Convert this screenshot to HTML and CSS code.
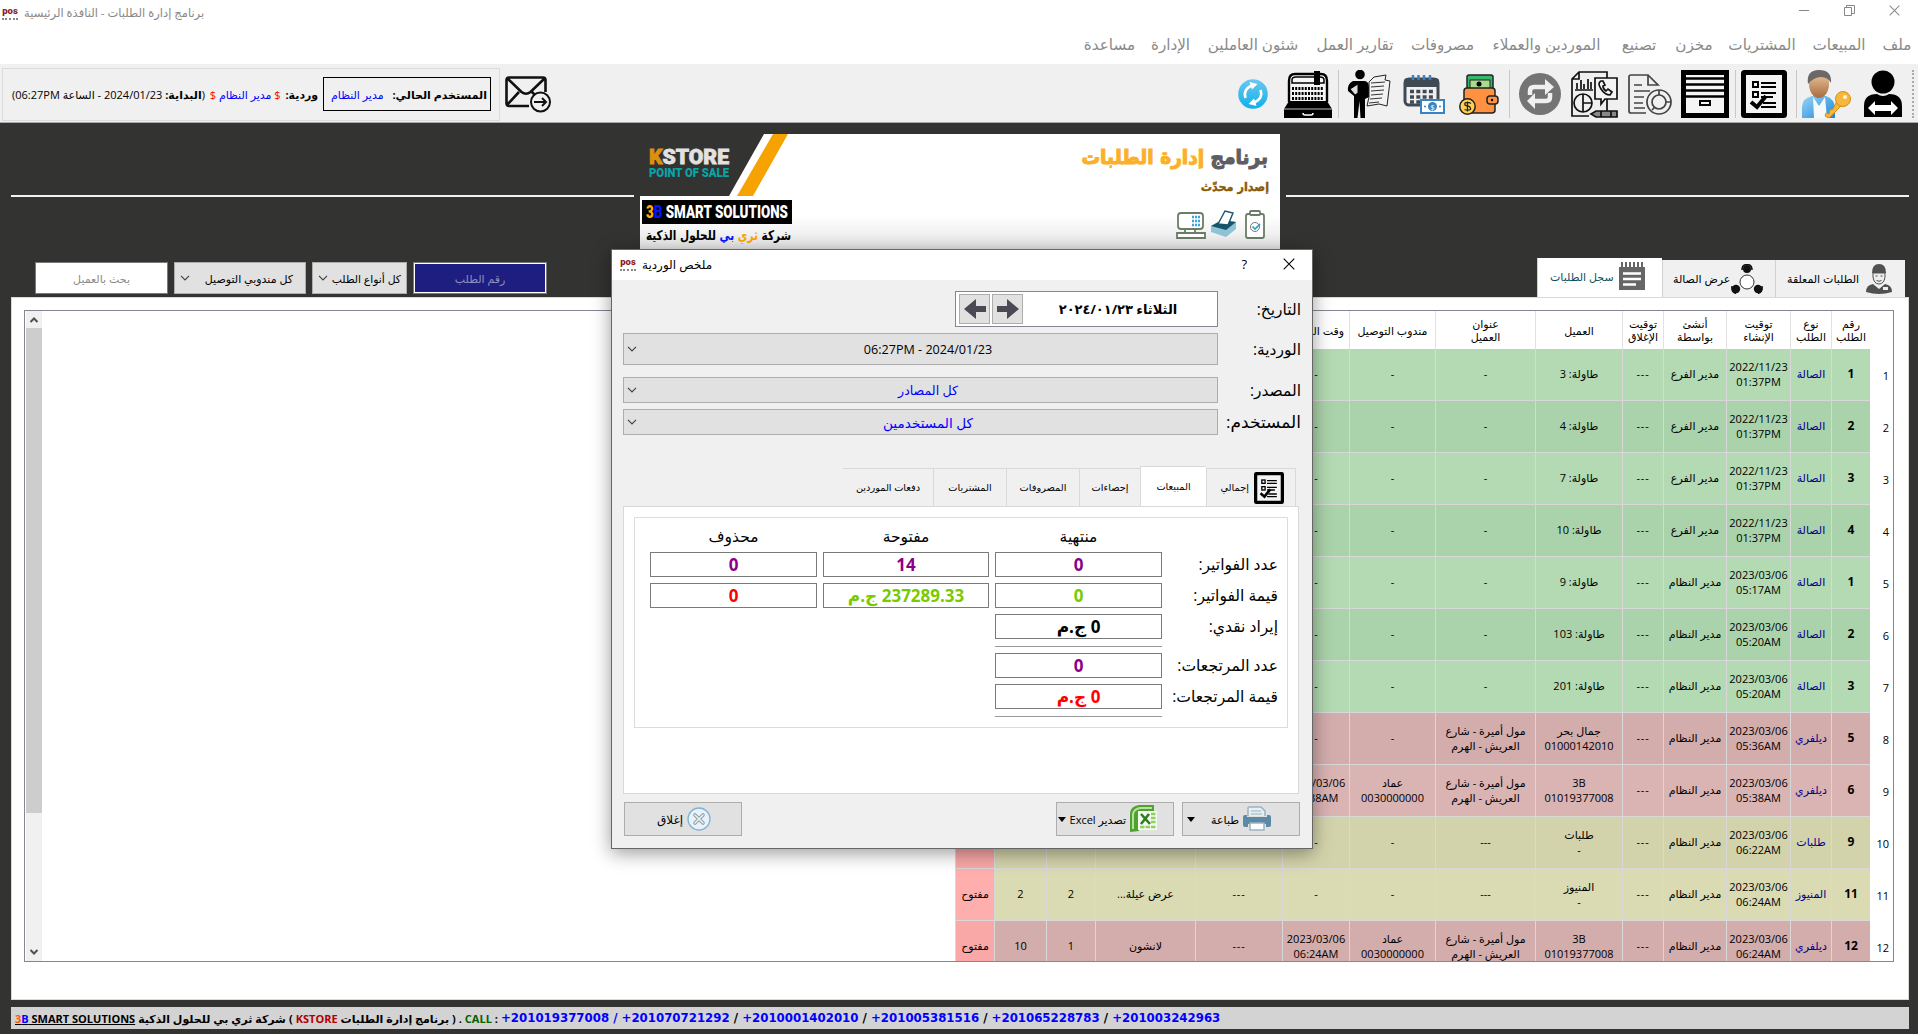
FILE: index.html
```
<!DOCTYPE html>
<html lang="ar" dir="rtl">
<head>
<meta charset="utf-8">
<title>برنامج إدارة الطلبات - النافذة الرئيسية</title>
<link rel="stylesheet" href="styles.css">
</head>
<body>
<svg width="0" height="0" class="defs">
  <symbol id="checklist" viewBox="0 0 46 48" preserveAspectRatio="none"><rect x="2.5" y="2.5" width="41" height="43" rx="1" fill="#f4f4f4" stroke="#000" stroke-width="5"/><g fill="none" stroke="#000" stroke-width="2"><rect x="12" y="12" width="5" height="5"/><rect x="12" y="22" width="5" height="5"/><path d="M20 13h15M20 17h15M20 23h15M20 27h12M22 33h13M20 37h15"/></g><path d="M10 32l6 5 9-11" fill="none" stroke="#000" stroke-width="4"/></symbol>
  <symbol id="down" viewBox="0 0 10 6"><path d="M1 .8l4 4 4-4" fill="none" stroke="#444" stroke-width="1.2"/></symbol>
  <symbol id="close" viewBox="0 0 12 12"><path d="M.7.7l10.6 10.6M11.3.7L.7 11.3" fill="none" stroke="currentColor" stroke-width="1.1"/></symbol>
</svg>

<header class="titlebar">
  <div class="win-controls">
    <svg width="11" height="11"><path d="M0 5.5h10" stroke="#888"/></svg>
    <svg width="11" height="11"><path d="M.5 2.5h7v8h-7zM2.500 2.500v-2h8v8h-2.500" fill="none" stroke="#888"/></svg>
    <svg width="11" height="11" class="gray"><use href="#close"/></svg>
  </div>
  <div class="win-title gray"><span class="logo">pos</span><span>برنامج إدارة الطلبات - النافذة الرئيسية</span></div>
</header>

<nav class="menu">
  <span>ملف</span><span>المبيعات</span><span>المشتريات</span><span>مخزن</span><span>تصنيع</span><span>الموردين والعملاء</span><span>مصروفات</span><span>تقارير العمل</span><span>شئون العاملين</span><span>الإدارة</span><span>مساعدة</span>
</nav>

<div class="toolbar">
  <div class="tools">
    <i class="grip"></i>
    <svg width="40" height="48" viewBox="0 0 40 48"><circle cx="20" cy="12" r="11.500"/><path d="M1 47V36Q1 24 14 24q6 4 12 0 13 0 13 12v11z"/><path d="M5 38l7-7v4h16v-4l7 7-7 7v-4H12v4z" fill="#fff"/></svg>
    <svg width="50" height="48" viewBox="0 0 50 48"><defs><linearGradient id="shirt" x2="1" y2="1"><stop stop-color="#9bd4f7"/><stop offset="1" stop-color="#1689d8"/></linearGradient><linearGradient id="face" x2="0" y2="1"><stop stop-color="#f3cfa8"/><stop offset="1" stop-color="#a76b3e"/></linearGradient></defs><path d="M0 48V36q1-8 10-10h14q9 3 9 13v9z" fill="url(#shirt)"/><path d="M11 27l6 9 6-9 2 21H12z" fill="#f5f9fc"/><ellipse cx="17" cy="14" rx="10" ry="14" fill="url(#face)"/><path d="M6 14Q4 0 17 0t12 13q-3-6-10-6T6 14z" fill="#6b6866"/><g fill="#f6b73c" stroke="#d98d15"><path d="M35 31l5 4-13 13-4-2 1-3 3 1 1-4 3-1z"/><circle cx="41" cy="29" r="7.500"/></g><circle cx="43" cy="27" r="2" fill="#fff4d0"/></svg>
    <i class="sep"></i>
    <svg width="46" height="48"><use href="#checklist"/></svg>
    <i class="sep"></i>
    <svg width="48" height="48" viewBox="0 0 48 48"><rect x="2.500" y="2.500" width="43" height="43" fill="#f5f5f5" stroke="#000" stroke-width="5"/><path d="M4 8.500h40M4 14.500h40M4 20.500h40M4 26.500h40" stroke="#000" stroke-width="2.600"/><rect x="19" y="31" width="10" height="4" fill="none" stroke="#000" stroke-width="2"/></svg>
    <svg width="44" height="42" viewBox="0 0 44 42" fill="none" stroke="#444" stroke-width="1.700"><path d="M18 40H3q-2 0-2-2V4q0-2 2-2h17l10 10H20V2M6 12h8M6 18h16M6 24h10M6 30h9M6 35h11"/><circle cx="31" cy="29" r="12"/><circle cx="31" cy="29" r="7"/><path d="M31 17v5M43 29h-5M24 37l3-3"/></svg>
    <svg width="47" height="47" viewBox="0 0 47 47" fill="none" stroke="#111" stroke-width="1.700"><path d="M18 45H1V8l7-7h28v6M8 1v7H1M36 26v14M4 19h18M6 18V12M10 18v-9M13 18v-5M17 18V8M20 18v-7"/><path d="M24 7h22v21H34l-4 5v-5h-6z" fill="#f4f4f4"/><path d="M30 10q-4 2 0 8t9 6l2-3-4-3-2 2q-3-2-3-5l2-1-2-4z"/><circle cx="12" cy="32" r="9"/><path d="M12 23v18M12 32h9"/><path d="M20 43l5-3h21v6H25zM30 40v6M40 40v6" fill="#888"/></svg>
    <svg width="42" height="42" viewBox="0 0 42 42"><circle cx="21" cy="21" r="21" fill="#747474"/><g fill="none" stroke="#f0f0f0" stroke-width="4.500"><path d="M11 22v-4q0-4 4-4h14"/><path d="M31 20v4q0 4-4 4H15"/></g><path d="M26 6l9 8-9 8zM16 20l-8 8 8 8z" fill="#f0f0f0"/></svg>
    <i class="sep"></i>
    <svg width="40" height="41" viewBox="0 0 40 41"><rect x="8" y="1" width="26" height="18" rx="2" fill="#35b86b" stroke="#222" stroke-width="1.500"/><rect x="11" y="6" width="20" height="12" fill="#a7dd8d" stroke="#222"/><circle cx="20" cy="10" r="2.500"/><rect x="5" y="14" width="31" height="25" rx="3" fill="#ff9140" stroke="#222" stroke-width="1.500"/><rect x="28" y="22" width="11" height="8" rx="3" fill="#ff9140" stroke="#222" stroke-width="1.500"/><circle cx="33" cy="26" r="1.200"/><circle cx="8.500" cy="32.500" r="7.700" fill="#ffd052" stroke="#222" stroke-width="1.500"/><path d="M12 29.500q-3-2-6-.5-1 2.500 2.500 3t3 3.500q-3 1.500-6 0M8.500 27.500v10" fill="none" stroke="#222" stroke-width="1.300"/></svg>
    <svg width="42" height="39" viewBox="0 0 42 39"><rect x="2" y="4" width="33" height="26" rx="4" fill="none" stroke="#404a54" stroke-width="3"/><path d="M1 12V6q0-3 4-3h27q4 0 4 3v6z" fill="#404a54"/><path d="M10 0v5M15.500 0v5M21 0v5M27 0v5" stroke="#3b82c4" stroke-width="2.500"/><path d="M7 16.500h23M7 22h23M7 27h12" stroke="#404a54" stroke-width="3.500" stroke-dasharray="4 2.300"/><rect x="18" y="25" width="23" height="13" fill="#fff" stroke="#3b82c4" stroke-width="2"/><circle cx="29.500" cy="31.500" r="4.500" fill="#3b82c4"/><text x="29.500" y="34.500" font-size="8" text-anchor="middle" fill="#fff">$</text><circle cx="22" cy="31.500" r="1" fill="#3b82c4"/><circle cx="37" cy="31.500" r="1" fill="#3b82c4"/></svg>
    <svg width="44" height="48" viewBox="0 0 44 48"><circle cx="13" cy="4.500" r="4.800"/><path d="M6 11h12q4 1 4 6v10l-4 2v19h-4.500l-1-17-2 17H7V26l-6-5q-1-7 5-10z"/><path d="M3 19l8-5v9l-3 2z" fill="#ddd" stroke="#000"/><path d="M27 7l12-2-1 5 5 1-3 25-8-2-12 2 2-9V12z" fill="#f2f2f2" stroke="#222"/><path d="M24 13l14-1M24 17l13-1M24 21l13-1M24 25l12-1M23 29l12-1M22 33l10-1" stroke="#333"/></svg>
    <i class="sep"></i>
    <svg width="48" height="47" viewBox="0 0 48 47"><path d="M5 31V10q0-7 6-7h26q6 0 6 7v21" fill="#f5f5f5" stroke="#000" stroke-width="2.400"/><path d="M8 12V9q0-3 4-3h24q4 0 4 3v3z" fill="none" stroke="#000" stroke-width="1.500"/><path d="M30 0h6v14h-6z"/><path d="M8 17.500h32M8 22.500h32M8 27.500h32" stroke="#000" stroke-width="3" stroke-dasharray="2 1.200"/><path d="M5 30h38l5 8v9H0v-9z"/><path d="M0 38h48" stroke="#bbb"/><path d="M19 42q0 2 2 2h6q2 0 2-2" fill="none" stroke="#fff" stroke-width="1.500"/></svg>
    <svg width="30" height="30" viewBox="0 0 30 30"><defs><linearGradient id="sky" x2="0" y2="1"><stop stop-color="#6cc8f2"/><stop offset="1" stop-color="#0fb0ea"/></linearGradient></defs><circle cx="15" cy="15" r="14.800" fill="url(#sky)"/><g fill="none" stroke="#fff" stroke-width="2.600"><path d="M7.500 19q-3-8 6-12.500"/><path d="M22.500 11q3 8-6 12.500"/></g><path d="M11.500 3l8 2-5.500 5.500zM18.500 27l-8-2 5.500-5.500z" fill="#fff"/></svg>
  </div>
  <div class="status-side">
    <svg width="47" height="37" viewBox="0 0 47 37" fill="none" stroke="#111" stroke-width="2.600"><path d="M24 30H4q-2.500 0-2.500-2.500V4q0-2.500 2.500-2.500h34Q40.500 1.500 40.500 4v12M3 3l13.500 13q4.500 3.500 9 0L39 3M2 29l12-13M27 16l3 3"/><circle cx="35.500" cy="26" r="9.500" stroke-width="2"/><path d="M29 26h12M37 22l4 4-4 4" stroke-width="2"/></svg>
    <div class="status">
      <div class="user-box"><b>المستخدم الحالي:</b><span class="blue">مدير النظام</span></div>
      <b>وردية:</b>
      <span class="blue"><em>$</em> مدير النظام <em>$</em></span>
      <span>(<b>البداية:</b> 2024/01/23 - الساعة <bdi>06:27PM</bdi>)</span>
    </div>
  </div>
</div>

<main>
  <div class="hero">
    <i class="rule"></i>
    <svg class="banner" width="640" height="116" viewBox="0 0 640 116" direction="ltr">
      <defs><linearGradient id="fade" x2="0" y2="1"><stop offset=".7" stop-color="#fff"/><stop offset="1" stop-color="#e6e6e6"/></linearGradient></defs>
      <rect width="640" height="116" fill="url(#fade)"/>
      <path d="M0 0h124L89 62H0z" fill="#333331"/><path d="M133 0h15l-35 62H97z" fill="#f6a200"/>
      <g font-family="Roboto, sans-serif" font-weight="900">
        <text x="9" y="30" font-size="20" textLength="80" lengthAdjust="spacingAndGlyphs" fill="#e2e2e2" stroke="#e2e2e2" stroke-width=".8"><tspan fill="#d9920f" stroke="#d9920f">K</tspan>STORE</text>
        <text x="9" y="43" font-size="12.500" textLength="80" lengthAdjust="spacingAndGlyphs" fill="#0aa3a8">POINT OF SALE</text>
      </g>
      <rect x="2" y="66" width="150" height="24" fill="#000"/>
      <text x="6" y="84" font-family="Roboto, sans-serif" font-weight="900" font-size="18" textLength="142" lengthAdjust="spacingAndGlyphs" fill="#fff"><tspan fill="#ffb000">3</tspan><tspan fill="#0018ff">B</tspan> SMART SOLUTIONS</text>
      <g direction="rtl" font-family="DejaVu Sans, sans-serif" font-weight="700">
        <text transform="translate(151 106) scale(.78 1)" font-size="13.500" fill="#000">شركة <tspan fill="#ffa500">ثري</tspan> <tspan fill="#0018ff">بي</tspan> للحلول الذكية</text>
        <text transform="translate(628 30) scale(.93 1)" font-size="20" fill="#5e5e62" stroke="#5e5e62" stroke-width="1.100">برنامج <tspan fill="#fbb02a" stroke="#fbb02a">إدارة الطلبات</tspan></text>
        <text transform="translate(629 57) scale(.9 1)" font-size="12.500" fill="#8a5a08" stroke="#8a5a08" stroke-width=".4">إصدار محدّث</text>
      </g>
      <g fill="#fff" stroke="#6b7d66" stroke-width="1.800"><rect x="538" y="79" width="25" height="16" rx="3"/><path d="M545 95h10v4h-10zM537 99h28v5h-28z"/><rect x="606" y="80" width="18" height="24" rx="2"/><rect x="610" y="77" width="10" height="4" rx="1"/></g>
      <path d="M552 83h8M552 87h8M552 91h8" stroke="#3aa5d8" stroke-width="2.500" stroke-dasharray="2 1"/>
      <path d="M571 92l11-6 14 2v7l-10 8-15-5z" fill="#8fc3d6"/><path d="M571 92l11-6 14 2-10 8z" fill="#17536b"/><path d="M578 90l7-13 8 2-5 12z" fill="#fff" stroke="#17536b" stroke-width="1.400"/>
      <circle cx="615" cy="93" r="4.500" fill="none" stroke="#777"/><path d="M612.500 92.500l2.500 2.500 5-5" fill="none" stroke="#2a9fc9" stroke-width="1.600"/>
    </svg>
    <i class="rule"></i>
  </div>

  <div class="top-row">
    <div class="tabs">
      <div class="tab t1"><svg width="26" height="30" viewBox="0 0 26 30" fill="#505050"><path d="M6 9q0-9 7-9t7 9z"/><path d="M7 9h12v4q-1 7-6 7t-6-7z" fill="#eee" stroke="#505050"/><path d="M0 28q0-7 7-8l6 5 6-5q7 1 7 8-13 4-26 0z"/><path d="M9.500 12h2M14.500 12h2M10.500 16.500q2.500 1.500 5 0" fill="none" stroke="#505050"/><rect x="17" y="23" width="5" height="3" fill="#eee"/></svg><span>الطلبات المعلقة</span></div>
      <div class="tab t2"><svg width="32" height="30" viewBox="0 0 32 30"><circle cx="16" cy="18" r="7" fill="#fff" stroke="#333"/><g fill="#111"><circle cx="16" cy="5" r="4"/><circle cx="5" cy="25" r="4.200"/><circle cx="27" cy="25" r="4.200"/></g><path d="M11 6q0-5.500 5-5.500T21 6M1 22q-1 6 4 7.500M31 22q1 6-4 7.500" fill="none" stroke="#111" stroke-width="1.500"/></svg><span>عرض الصالة</span></div>
      <div class="tab t3 active"><svg width="28" height="29" viewBox="0 0 28 29"><path d="M1 5h26v23H1z" fill="#666"/><path d="M4 0v6M8 0v6M12 0v6M16 0v6M20 0v6M24 0v6" stroke="#666" stroke-width="2"/><path d="M5 11.500h18M5 17h18M5 22.500h13" stroke="#fff" stroke-width="2.500"/></svg><span>سجل الطلبات</span></div>
    </div>
    <div class="filters">
      <div class="field number">رقم الطلب</div>
      <div class="select kinds"><span>كل أنواع الطلب</span><svg width="10" height="6"><use href="#down"/></svg></div>
      <div class="select couriers"><span>كل مندوبي التوصيل</span><svg width="10" height="6"><use href="#down"/></svg></div>
      <div class="field client">بحث بالعميل</div>
    </div>
  </div>

  <section class="panel">
    <div class="grid-frame">
      <table class="orders">
        <colgroup><col class="w21"><col class="w39"><col class="w41"><col class="w64"><col class="w63"><col class="w41"><col class="w87"><col class="w100"><col class="w86"><col class="w67"><col class="w87"><col class="w100"><col class="w49"><col class="w52"><col class="w39"></colgroup>
        <thead><tr><th></th><th>رقم<br>الطلب</th><th>نوع<br>الطلب</th><th>توقيت<br>الإنشاء</th><th>أنشئ<br>بواسطة</th><th>توقيت<br>الإغلاق</th><th>العميل</th><th>عنوان<br>العميل</th><th>مندوب التوصيل</th><th>وقت الخروج</th><th></th><th></th><th></th><th></th><th></th></tr></thead>
        <tbody>
          <tr class="g1"><th>1</th><td>1</td><td>الصالة</td><td>2022/11/23<br>01:37PM</td><td>مدير الفرع</td><td>---</td><td>طاولة: 3</td><td>-</td><td>-</td><td>-</td><td></td><td></td><td></td><td></td><td></td></tr>
          <tr class="g2"><th>2</th><td>2</td><td>الصالة</td><td>2022/11/23<br>01:37PM</td><td>مدير الفرع</td><td>---</td><td>طاولة: 4</td><td>-</td><td>-</td><td>-</td><td></td><td></td><td></td><td></td><td></td></tr>
          <tr class="g1"><th>3</th><td>3</td><td>الصالة</td><td>2022/11/23<br>01:37PM</td><td>مدير الفرع</td><td>---</td><td>طاولة: 7</td><td>-</td><td>-</td><td>-</td><td></td><td></td><td></td><td></td><td></td></tr>
          <tr class="g2"><th>4</th><td>4</td><td>الصالة</td><td>2022/11/23<br>01:37PM</td><td>مدير الفرع</td><td>---</td><td>طاولة: 10</td><td>-</td><td>-</td><td>-</td><td></td><td></td><td></td><td></td><td></td></tr>
          <tr class="g1"><th>5</th><td>1</td><td>الصالة</td><td>2023/03/06<br>05:17AM</td><td>مدير النظام</td><td>---</td><td>طاولة: 9</td><td>-</td><td>-</td><td>-</td><td></td><td></td><td></td><td></td><td></td></tr>
          <tr class="g2"><th>6</th><td>2</td><td>الصالة</td><td>2023/03/06<br>05:20AM</td><td>مدير النظام</td><td>---</td><td>طاولة: 103</td><td>-</td><td>-</td><td>-</td><td></td><td></td><td></td><td></td><td></td></tr>
          <tr class="g1"><th>7</th><td>3</td><td>الصالة</td><td>2023/03/06<br>05:20AM</td><td>مدير النظام</td><td>---</td><td>طاولة: 201</td><td>-</td><td>-</td><td>-</td><td></td><td></td><td></td><td></td><td></td></tr>
          <tr class="r2"><th>8</th><td>5</td><td>ديلفري</td><td>2023/03/06<br>05:36AM</td><td>مدير النظام</td><td>---</td><td>جمال بحر<br>01000142010</td><td>مول أميرة - شارع<br>العريش - الهرم</td><td>-</td><td>-</td><td></td><td></td><td></td><td></td><td></td></tr>
          <tr class="r1"><th>9</th><td>6</td><td>ديلفري</td><td>2023/03/06<br>05:38AM</td><td>مدير النظام</td><td>---</td><td>3B<br>01019377008</td><td>مول أميرة - شارع<br>العريش - الهرم</td><td>عماد<br>0030000000</td><td>2023/03/06<br>05:38AM</td><td></td><td></td><td></td><td></td><td></td></tr>
          <tr class="y2"><th>10</th><td>9</td><td>طلبات</td><td>2023/03/06<br>06:22AM</td><td>مدير النظام</td><td>---</td><td>طلبات<br>-</td><td>---</td><td>-</td><td>-</td><td>---</td><td>وجبة عائلي فروج</td><td></td><td></td><td>مفتوح</td></tr>
          <tr class="y1"><th>11</th><td>11</td><td>المنيوز</td><td>2023/03/06<br>06:24AM</td><td>مدير النظام</td><td>---</td><td>المنيوز<br>-</td><td>---</td><td>-</td><td>-</td><td>---</td><td>عرض عيلة...</td><td>2</td><td>2</td><td>مفتوح</td></tr>
          <tr class="r2"><th>12</th><td>12</td><td>ديلفري</td><td>2023/03/06<br>06:24AM</td><td>مدير النظام</td><td>---</td><td>3B<br>01019377008</td><td>مول أميرة - شارع<br>العريش - الهرم</td><td>عماد<br>0030000000</td><td>2023/03/06<br>06:24AM</td><td>---</td><td>لانشون</td><td>1</td><td>10</td><td>مفتوح</td></tr>
        </tbody>
      </table>
      <div class="scrollbar"><svg width="16" height="17"><path d="M4.500 11L8 7.500l3.500 3.500" fill="none" stroke="#505050" stroke-width="2"/></svg><i></i><svg width="16" height="18"><path d="M4.500 7L8 10.500 11.500 7" fill="none" stroke="#505050" stroke-width="2"/></svg></div>
    </div>
  </section>

  <footer dir="ltr">
    <u><span class="orange">3</span><span class="blue">B</span> SMART SOLUTIONS</u>
    <span dir="rtl">شركة ثري بي للحلول الذكية</span>
    <span>(</span>
    <span class="kstore">KSTORE</span>
    <span dir="rtl">برنامج إدارة الطلبات</span>
    <span>) .</span>
    <span class="call">CALL</span><span>:</span>
    <span class="phones">+201019377008 / +201070721292 <s>/</s> +2010001402010 <s>/</s> +201005381516 <s>/</s> +201065228783 <s>/</s> +201003242963</span>
  </footer>
</main>

<div class="dialog">
  <div class="dlg-title">
    <div class="dlg-name"><span class="logo">pos</span><span>ملخص الوردية</span></div>
    <div class="dlg-controls"><span>?</span><svg width="12" height="12"><use href="#close"/></svg></div>
  </div>
  <div class="form">
    <label>التاريخ:</label>
    <div class="date">
      <b>الثلاثاء ٢٠٢٤/٠١/٢٣</b>
      <button><svg width="24" height="22" viewBox="0 0 24 22"><path d="M1 8h10V1l12 10-12 10v-7H1z" fill="#4a4a55"/></svg></button>
      <button><svg width="24" height="22" viewBox="0 0 24 22"><path d="M23 8H13V1L1 11l12 10v-7h10z" fill="#4a4a55"/></svg></button>
    </div>
    <label>الوردية:</label>
    <div class="select wide tall"><span><bdi dir="ltr">06:27PM - 2024/01/23</bdi></span><svg width="10" height="6"><use href="#down"/></svg></div>
    <label>المصدر:</label>
    <div class="select wide blue"><span>كل المصادر</span><svg width="10" height="6"><use href="#down"/></svg></div>
    <label class="user">المستخدم:</label>
    <div class="select wide blue users"><span>كل المستخدمين</span><svg width="10" height="6"><use href="#down"/></svg></div>
  </div>
  <div class="dtabs">
    <div class="dtab d1"><svg width="30" height="32"><use href="#checklist"/></svg><span>إجمالي</span></div>
    <div class="dtab d2 on">المبيعات</div>
    <div class="dtab d3">إحصاءات</div>
    <div class="dtab d4">المصروفات</div>
    <div class="dtab d5">المشتريات</div>
    <div class="dtab d6">دفعات الموردين</div>
  </div>
  <div class="sheet">
    <div class="group">
      <span></span><h4>منتهية</h4><h4>مفتوحة</h4><h4>محذوف</h4>
      <label>عدد الفواتير:</label><div class="val purple">0</div><div class="val purple">14</div><div class="val purple">0</div>
      <label>قيمة الفواتير:</label><div class="val lime">0</div><div class="val lime">237289.33 ج.م</div><div class="val red">0</div>
      <label>إيراد نقدي:</label><div class="val">0 ج.م</div><span></span><span></span>
      <span></span><hr><span></span><span></span>
      <label>عدد المرتجعات:</label><div class="val purple">0</div><span></span><span></span>
      <label>قيمة المرتجعات:</label><div class="val red">0 ج.م</div><span></span><span></span>
      <span></span><hr><span></span><span></span>
    </div>
  </div>
  <div class="actions">
    <button class="print"><svg width="28" height="26" viewBox="0 0 28 26"><path d="M5 10V2q0-1 1-1h12l4 4v5" fill="#e8eff3" stroke="#9ab2c0" stroke-width="1.500"/><path d="M8 5h10M8 8h11" stroke="#9ab2c0"/><path d="M0 11q0-2 2-2h2v2h20V9h2q2 0 2 2v8q0 2-2 2h-3v-3H5v3H2q-2 0-2-2z" fill="#5b8aa6"/><rect x="7" y="17" width="14" height="7" fill="#fff" stroke="#9ab2c0" stroke-width="1.500"/></svg><span>طباعة</span><i class="caret"></i></button>
    <button class="excel"><svg width="28" height="28" viewBox="0 0 28 28"><path d="M0 27V8Q1 1 9 0h15v6H9v20z" fill="#4fa130"/><path d="M3 24V9q1-5 7-6h12" fill="none" stroke="#b5e29a" stroke-width="2"/><rect x="8" y="6" width="19" height="19" fill="#f4faf0"/><path d="M21 9h5M21 13h5M21 17h5M10 22h16" stroke="#8fd05e" stroke-width="2.600" stroke-dasharray="4.500 1"/><path d="M11 9l9 10M19 9l-8 10" stroke="#2f7d1f" stroke-width="2.600"/></svg><span>تصدير Excel</span><i class="caret"></i></button>
    <button class="shut"><svg width="24" height="24" viewBox="0 0 24 24"><circle cx="12" cy="12" r="11" fill="#eaf2f8" stroke="#7fb4d8" stroke-width="1.300"/><path d="M8 8l8 8M16 8l-8 8" stroke="#8aa0ac" stroke-width="3.600" stroke-linecap="round"/><path d="M8 8l8 8M16 8l-8 8" stroke="#eef3f6" stroke-width="1.500" stroke-linecap="round"/></svg><span>إغلاق</span></button>
  </div>
</div>
</body>
</html>
```
FILE: styles.css
```
* { box-sizing: border-box; }
body { margin: 0; width: 1918px; height: 1034px; overflow: hidden; display: flex; flex-direction: column; background: #fff; font: 11px/15px "Open Sans", "DejaVu Sans", sans-serif; color: #000; position: relative; }
svg { flex: none; display: block; }
.defs { position: absolute; }
.blue { color: #0000ff; }
.gray { color: #888; }

.titlebar { height: 23px; display: flex; justify-content: space-between; align-items: flex-start; padding: 5px 18px 0 2px; }
.win-controls { display: flex; direction: ltr; gap: 34px; }
.win-title { display: flex; direction: ltr; gap: 6px; align-items: center; font-size: 11.5px; line-height: 15px; }
.win-title span:last-child { direction: rtl; }
.logo { width: 16px; height: 14px; color: #8e1d25; font: 900 9.5px/9px Roboto, sans-serif; text-align: center; border-bottom: 2px dotted #888; direction: ltr; }

.menu { height: 43px; border-bottom: 2px solid #f0f0f0; display: grid; grid-template-columns: 28px 54px 66px 36px 40px 111px 63px 78px 92px 39px 49px; column-gap: 17px; padding: 2px 7px 0 0; align-items: center; font-size: 15.2px; color: #8a8a8a; white-space: nowrap; }
.menu span { display: flex; justify-content: center; }

.toolbar { height: 57px; background: #f0f0f0; border-bottom: 1px solid #a8a8a8; display: flex; justify-content: space-between; padding: 0 4px 0 2px; }
.tools { display: flex; align-items: center; }
.tools > :nth-child(2), .tools > :nth-child(15) { margin-right: 8px; }
.tools > :nth-child(3) { margin-right: 11px; }
.tools > :nth-child(4), .tools > :nth-child(6) { margin-right: 5px; }
.tools > :nth-child(5), .tools > :nth-child(8), .tools > :nth-child(11) { margin-right: 9px; }
.tools > :nth-child(7), .tools > :nth-child(16) { margin-right: 6px; }
.tools > :nth-child(9), .tools > :nth-child(10), .tools > :nth-child(12) { margin-right: 10px; }
.tools > :nth-child(13) { margin-right: 14px; }
.tools > :nth-child(14) { margin-right: 12px; }
.tools > :nth-child(17) { margin-right: 16px; }
.grip { width: 3px; height: 48px; border-right: 2px dotted #aaa; }
.sep { width: 1px; height: 48px; background: #c8c8c8; }
.status-side { display: flex; align-items: center; gap: 5px; }
.status { width: 498px; height: 53px; border: 1px solid #dcdcdc; display: flex; align-items: center; padding: 0 8px 0 9px; white-space: nowrap; justify-content: space-between; }
.user-box { width: 168px; height: 34px; border: 1px solid #000; display: flex; align-items: center; justify-content: space-between; padding: 0 3px 0 7px; }
.status em { color: #f00; font-style: normal; }

main { flex: 1; background: #333331; display: flex; flex-direction: column; padding: 0 9px 0 11px; }
.hero { height: 127px; padding-top: 11px; display: flex; justify-content: space-between; align-items: center; gap: 6px; }
.rule { flex: 1; height: 2px; background: #f2f2f2; margin-top: 8px; }

.top-row { height: 47px; display: flex; justify-content: space-between; align-items: flex-end; }
.tabs { display: flex; align-items: flex-end; padding-right: 4px; }
.tab { height: 37px; background: #f0f0f0; border-left: 1px solid #d0d0d0; display: flex; align-items: center; justify-content: space-between; white-space: nowrap; }
.t1 { width: 130px; padding: 0 13px 0 11px; }
.t2 { width: 113px; padding: 0 12px 0 10px; }
.t3 { width: 125px; height: 39px; padding: 0 16px 2px 12px; background: #fff; color: #0b5260; }
.filters { display: flex; direction: ltr; flex-direction: row-reverse; gap: 6px; margin: 0 0 3px 24px; color: #000; }
.field, .select { height: 32px; border: 1px solid #7a7a7a; display: flex; align-items: center; justify-content: center; }
.number { width: 134px; background: #1e1e80; color: #8f8fc0; box-shadow: inset 0 0 0 1px #fff; }
.client { width: 133px; background: #fff; color: #8a8a8a; }
.select { background: #e1e1e1; border-color: #adadad; direction: rtl; justify-content: space-between; padding: 0 5px; white-space: nowrap; }
.kinds { width: 95px; }
.kinds span { font-size: 10.8px; }
.couriers { width: 132px; padding-right: 12px; }

.panel { height: 703px; background: #fff; border: 1px solid #d9d9d9; padding: 12px 14px 0 12px; }
.grid-frame { height: 652px; border: 1px solid #828790; display: flex; justify-content: space-between; overflow: hidden; padding-left: 1px; }
.orders { border-collapse: separate; border-spacing: 0; table-layout: fixed; width: 936px; height: 662px; margin-right: 2px; }
.orders thead tr { height: 38px; }
.orders thead th { line-height: 13px; border-left: 1px solid #e2e2e2; text-align: center; }
.orders th { font-weight: 400; padding: 0; white-space: nowrap; text-align: right; }
.orders tbody th { padding-right: 2px; }
.orders tbody tr { height: 52px; }
.orders td { padding: 0 0 2px; text-align: center; vertical-align: middle; border-left: 1px solid #d8d8d8; border-bottom: 1px solid #d8d8d8; white-space: nowrap; overflow: hidden; }
.orders td:nth-child(2) { font-weight: 700; font-size: 12px; }
.orders td:nth-child(3) { color: #00008b; }
.orders td:nth-child(6), .orders td:nth-child(11) { letter-spacing: .8px; }
.orders thead th:first-child { border: 0; }
.w21 { width: 21px; } .w39 { width: 39px; } .w41 { width: 41px; } .w64 { width: 64px; } .w63 { width: 63px; } .w87 { width: 87px; } .w100 { width: 100px; } .w86 { width: 86px; } .w67 { width: 67px; } .w49 { width: 49px; } .w52 { width: 52px; }
.g1 td { background: #b3dab3; } .g2 td { background: #abd3ab; }
.r1 td { background: #dab3b3; } .r2 td { background: #d3acac; }
.y1 td { background: #dadab3; } .y2 td { background: #d3d3ab; }
.orders tbody td:last-child { background: #ffaeae; }
.orders tbody .r2 td:last-child, .orders tbody .y2 td:last-child { background: #faa7a7; }
.scrollbar { width: 16px; background: #f0f0f0; display: flex; flex-direction: column; }
.scrollbar i { height: 485px; background: #cdcdcd; margin-bottom: auto; }

footer { margin-top: 7px; height: 22px; background: #d3d3d3; display: flex; align-items: center; gap: 3px; padding-left: 4px; white-space: nowrap; font-weight: 700; font-size: 11px; }
.orange { color: #ff5a00; } .kstore { color: #b00000; } .call { color: #006000; }
.phones { color: #00f; font-family: "DejaVu Sans", sans-serif; font-size: 11.77px; }
.phones s { color: #000; text-decoration: none; }

.dialog { position: absolute; left: 611px; top: 249px; width: 702px; height: 600px; background: #f0f0f0; border: 1px solid #666; box-shadow: 0 4px 18px rgba(0,0,0,.4); display: flex; flex-direction: column; }
.dlg-title { height: 30px; background: #fff; display: flex; direction: ltr; justify-content: space-between; align-items: center; padding: 0 17px 2px 8px; font-size: 12px; }
.dlg-name, .dlg-controls { display: flex; align-items: center; gap: 6px; }
.dlg-controls { gap: 36px; font-size: 13px; }
.form { display: grid; grid-template-columns: 83px 595px; grid-template-rows: 36px 32px 32px 26px; row-gap: 6px; padding: 11px 11px 0 0; align-items: end; }
.form label { font-size: 15.5px; line-height: 24px; white-space: nowrap; align-self: end; padding-bottom: 1px; }
.form label:nth-of-type(1), .form label:nth-of-type(2) { align-self: center; padding: 0; }
.form .user { font-size: 17px; }
.date { width: 263px; height: 36px; background: #fff; border: 1px solid #828790; display: flex; align-items: center; gap: 2px; padding-left: 3px; }
.date b { flex: 1; text-align: center; font-size: 13px; padding-right: 6px; }
.date button { width: 31px; height: 30px; padding: 0; border: 1px solid #adadad; background: #e1e1e1; display: flex; align-items: center; justify-content: center; }
.wide { height: 26px; padding: 0 0 0 3px; }
.wide span { flex: 1; text-align: center; font-size: 12.6px; padding-left: 2px; }
.wide.users span { font-size: 13.6px; }
.tall { height: 32px; }

.dtabs { display: flex; align-items: flex-end; height: 40px; margin: 31px 16px 0 0; }
.dtab { height: 38px; border-left: 1px solid #d9d9d9; border-top: 1px solid #d9d9d9; display: flex; align-items: center; justify-content: center; font-size: 9.8px; white-space: nowrap; }
.d1 { width: 90px; gap: 5px; border-right: 1px solid #d9d9d9; justify-content: flex-start; padding-right: 11px; } .d2 { width: 66px; } .d3 { width: 61px; } .d4 { width: 73px; } .d5 { width: 73px; } .d6 { width: 90px; border-left: 0; }
.on { height: 40px; background: #fff; }
.sheet { height: 288px; margin: 0 13px 0 11px; background: #fff; border: 1px solid #d9d9d9; padding: 10px 10px 0; }
.group { height: 211px; border: 1px solid #dcdcdc; padding: 9px 9px 0 0; display: grid; grid-template-columns: 110px 167px 166px 167px; grid-template-rows: 19px 25px 25px 25px 2px 25px 25px 2px; column-gap: 6px; row-gap: 6px; align-items: center; align-content: start; }
.group h4 { margin: 0; font-weight: 400; font-size: 15.5px; text-align: center; }
.group label { font-size: 15.6px; white-space: nowrap; }
.group hr { margin: 0; border: 0; width: 100%; height: 1px; background: #999; }
.val { height: 25px; border: 1px solid #7a7a7a; display: flex; align-items: center; justify-content: center; font-weight: 700; font-size: 17px; }
.purple { color: #8b008b; } .lime { color: #7c0; } .red { color: #f00; }
.actions { display: flex; padding: 8px 12px 0; gap: 8px; }
.actions button { width: 118px; height: 34px; border: 1px solid #adadad; background: #e1e1e1; font: inherit; display: flex; align-items: center; padding: 0 4px; gap: 4px; white-space: nowrap; }
.caret { border: 4px solid transparent; border-top: 5px solid #000; border-bottom: 0; margin-right: auto; }
.actions .print { padding-right: 28px; }
.actions .excel { padding-right: 15px; }
.actions .shut { margin-right: auto; padding-right: 30px; font-size: 12px; }
```
